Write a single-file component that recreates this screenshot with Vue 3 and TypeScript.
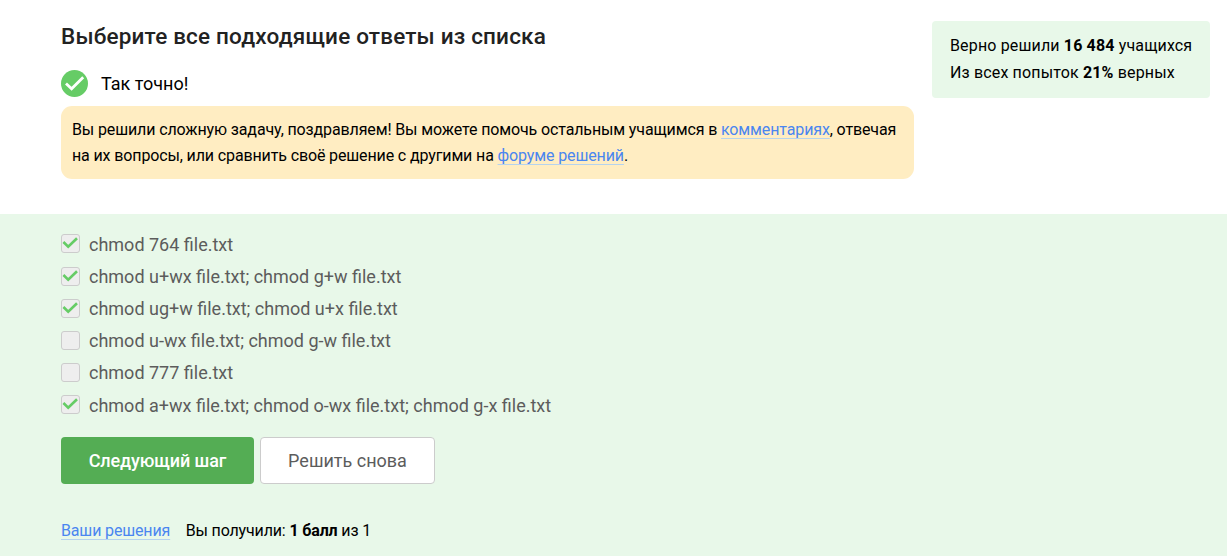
<script setup lang="ts">
interface Option { text: string; checked: boolean }

const options: Option[] = [
  { text: 'chmod 764 file.txt', checked: true },
  { text: 'chmod u+wx file.txt; chmod g+w file.txt', checked: true },
  { text: 'chmod ug+w file.txt; chmod u+x file.txt', checked: true },
  { text: 'chmod u-wx file.txt; chmod g-w file.txt', checked: false },
  { text: 'chmod 777 file.txt', checked: false },
  { text: 'chmod a+wx file.txt; chmod o-wx file.txt; chmod g-x file.txt', checked: true },
]
</script>

<template>
  <main class="page">
    <header class="top">
      <section class="task">
        <h1>Выберите все подходящие ответы из списка</h1>
        <div class="status">
          <svg width="27" height="27" viewBox="0 0 27 27">
            <circle cx="13.5" cy="13.5" r="13.5" fill="#66cc66" />
            <path d="M5 13.5l5.6 5.3L22.2 7.2" fill="none" stroke="#fff" stroke-width="2.8" />
          </svg>
          <span>Так точно!</span>
        </div>
        <p class="notice">
          Вы решили сложную задачу, поздравляем! Вы можете помочь остальным учащимся в <a>комментариях</a>, отвечая<br>
          на их вопросы, или сравнить своё решение с другими на <a>форуме решений</a>.
        </p>
      </section>
      <aside class="stats">
        <div>Верно решили <b>16 484</b> учащихся</div>
        <div>Из всех попыток <b>21%</b> верных</div>
      </aside>
    </header>
    <section class="answers">
      <ul>
        <li v-for="o in options" :key="o.text">
          <span class="box">
            <svg v-if="o.checked" width="17" height="17" viewBox="0 0 17 17">
              <path d="M1.4 7l4.8 4.7L15 3.2" fill="none" stroke="#66cc66" stroke-width="2.6" />
            </svg>
          </span>
          <span>{{ o.text }}</span>
        </li>
      </ul>
      <div class="actions">
        <button class="next">Следующий шаг</button>
        <button class="again">Решить снова</button>
      </div>
      <footer><a>Ваши решения</a><span>Вы получили: <b>1 балл</b> из 1</span></footer>
    </section>
  </main>
</template>

<style>
body { margin: 0; background: #fff; }
</style>
<style scoped>
.page { height: 556px; display: flex; flex-direction: column; overflow: hidden; font-family: Roboto, sans-serif; font-size: 16px; color: #000; box-sizing: border-box; }
.top { height: 214px; flex: none; display: flex; padding: 0 17px 0 61px; box-sizing: border-box; align-items: flex-start; gap: 18px; }
.task { width: 853px; flex: none; }
h1 { margin: 21px 0 0; font-size: 22.5px; letter-spacing: .18px; line-height: 31px; font-weight: 500; color: #222; white-space: nowrap; }
.status { display: flex; align-items: center; gap: 13px; height: 28px; margin-top: 17px; font-size: 18px; }
.notice { margin: 9px 0 0; height: 73px; padding: 11px; box-sizing: border-box; border-radius: 11px; background: #ffedc2; line-height: 26px; letter-spacing: -.13px; white-space: nowrap; }
a { color: #4a86f0; text-decoration: underline; text-decoration-color: #b5d3ee; text-decoration-thickness: 1px; text-underline-offset: 3px; }
.stats { margin-top: 21px; flex: 1; height: 77px; padding: 11px 18px; box-sizing: border-box; border-radius: 4px; background: #e8f8e9; line-height: 27px; letter-spacing: .15px; white-space: nowrap; }
b { font-weight: 700; color: #000; }
.answers { flex: 1; background: #e8f8e9; padding: 14.1px 61px 0; }
ul { list-style: none; margin: 0; padding: 0; }
li { height: 32.2px; display: flex; align-items: center; gap: 9px; font-size: 18px; color: #5c5c5c; }
.box { width: 17px; height: 17px; margin-top: -.6px; border: 1px solid #ccc; border-radius: 3px; background: #eee; }
.box svg { display: block; }
.actions { display: flex; gap: 6px; margin-top: 15.7px; }
button { height: 47px; padding: 0; font: 18px Roboto, sans-serif; border-radius: 4px; }
.next { width: 193px; border: 0; background: #54ad54; color: #fff; font-weight: 500; letter-spacing: -.1px; }
.again { width: 175px; border: 1px solid #ccc; background: #fff; color: #5c5c5c; }
footer { display: flex; gap: 15.5px; margin-top: 37px; line-height: 19px; letter-spacing: -.15px; }
</style>
